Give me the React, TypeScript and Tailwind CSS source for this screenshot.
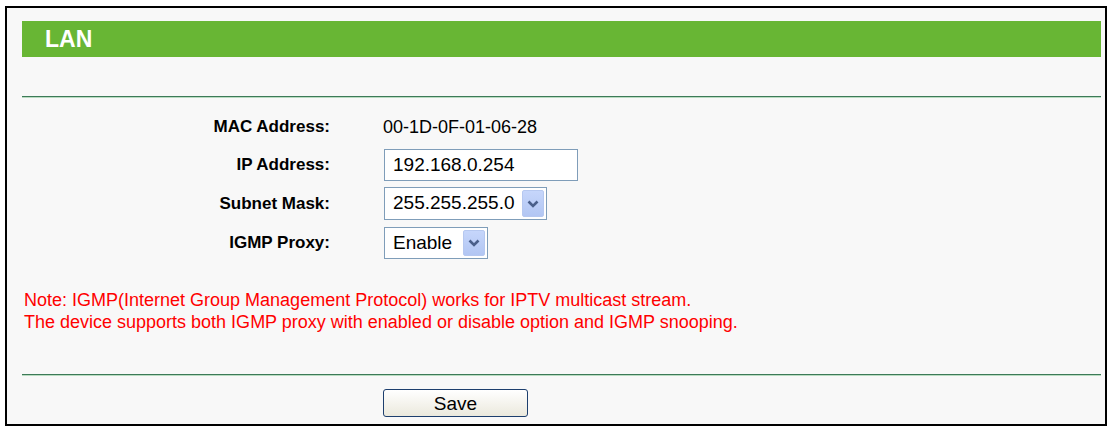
import React from 'react';

const font = { fontFamily: '"Liberation Sans", Arial, sans-serif' };

function Chevron() {
  return (
    <svg width="12" height="8" viewBox="0 0 12 8" className="block">
      <path d="M1.5 1.5 L6 6 L10.5 1.5" fill="none" stroke="#4a5f8a" strokeWidth="2.6" />
    </svg>
  );
}

function Divider() {
  return (
    <div className="w-full">
      <div className="h-[1px] bg-[#3d7a58]" />
      <div className="h-[1px] bg-[#b9dcc1]" />
    </div>
  );
}

function FakeSelect({ value, width }: { value: string; width: string }) {
  return (
    <div
      className={`flex h-full items-stretch border border-[#7f9db9] bg-white p-[2px] ${width}`}
    >
      <span className="flex flex-1 items-center pl-[6px] text-[19px] text-black">{value}</span>
      <span className="flex w-[22px] items-center justify-center rounded-[2px] border border-[#b6c8f0] bg-gradient-to-b from-[#c6d6fb] to-[#b2c6f3]">
        <Chevron />
      </span>
    </div>
  );
}

export default function App() {
  return (
    <div className="h-[429px] w-[1112px] bg-white pl-[5px] pt-[6px]" style={font}>
      <div className="h-[420px] w-[1102px] border-2 border-black bg-[#f8f8f8] pl-[15px] pr-[4px] pt-[13px]">
        <div className="flex h-[36px] items-center bg-[#68b634] pl-[23px] text-[23px] font-bold text-white">
          LAN
        </div>
        <div className="mt-[39px]">
          <Divider />
        </div>

        <div className="mt-[10px] flex flex-col">
          <div className="flex h-[38px] items-center">
            <span className="w-[308px] text-right text-[17px] font-bold text-black">MAC Address:</span>
            <span className="ml-[53px] text-[18px] text-black">00-1D-0F-01-06-28</span>
          </div>
          <div className="mt-[3px] flex h-[32px] items-center">
            <span className="w-[308px] text-right text-[17px] font-bold text-black">IP Address:</span>
            <div className="ml-[54px] flex h-full w-[194px] items-center border border-[#7f9db9] bg-white pl-[8px] text-[19px] text-black">
              192.168.0.254
            </div>
          </div>
          <div className="mt-[6px] flex h-[33px] items-center">
            <span className="w-[308px] text-right text-[17px] font-bold text-black">Subnet Mask:</span>
            <div className="ml-[54px] h-full">
              <FakeSelect value="255.255.255.0" width="w-[163px]" />
            </div>
          </div>
          <div className="mt-[7px] flex h-[32px] items-center">
            <span className="w-[308px] text-right text-[17px] font-bold text-black">IGMP Proxy:</span>
            <div className="ml-[54px] h-full">
              <FakeSelect value="Enable" width="w-[104px]" />
            </div>
          </div>
        </div>

        <div className="mt-[30px] pl-[2px] text-[18px] leading-[22px] text-[#ff0000]">
          <p>Note: IGMP(Internet Group Management Protocol) works for IPTV multicast stream.</p>
          <p>The device supports both IGMP proxy with enabled or disable option and IGMP snooping.</p>
        </div>

        <div className="mt-[41px]">
          <Divider />
        </div>

        <div className="mt-[13px] flex">
          <button className="ml-[361px] h-[28px] w-[145px] rounded-[3px] border border-[#1d3f6e] bg-gradient-to-b from-white to-[#ebe9dd] text-[19px] text-black">
            Save
          </button>
        </div>
      </div>
    </div>
  );
}
